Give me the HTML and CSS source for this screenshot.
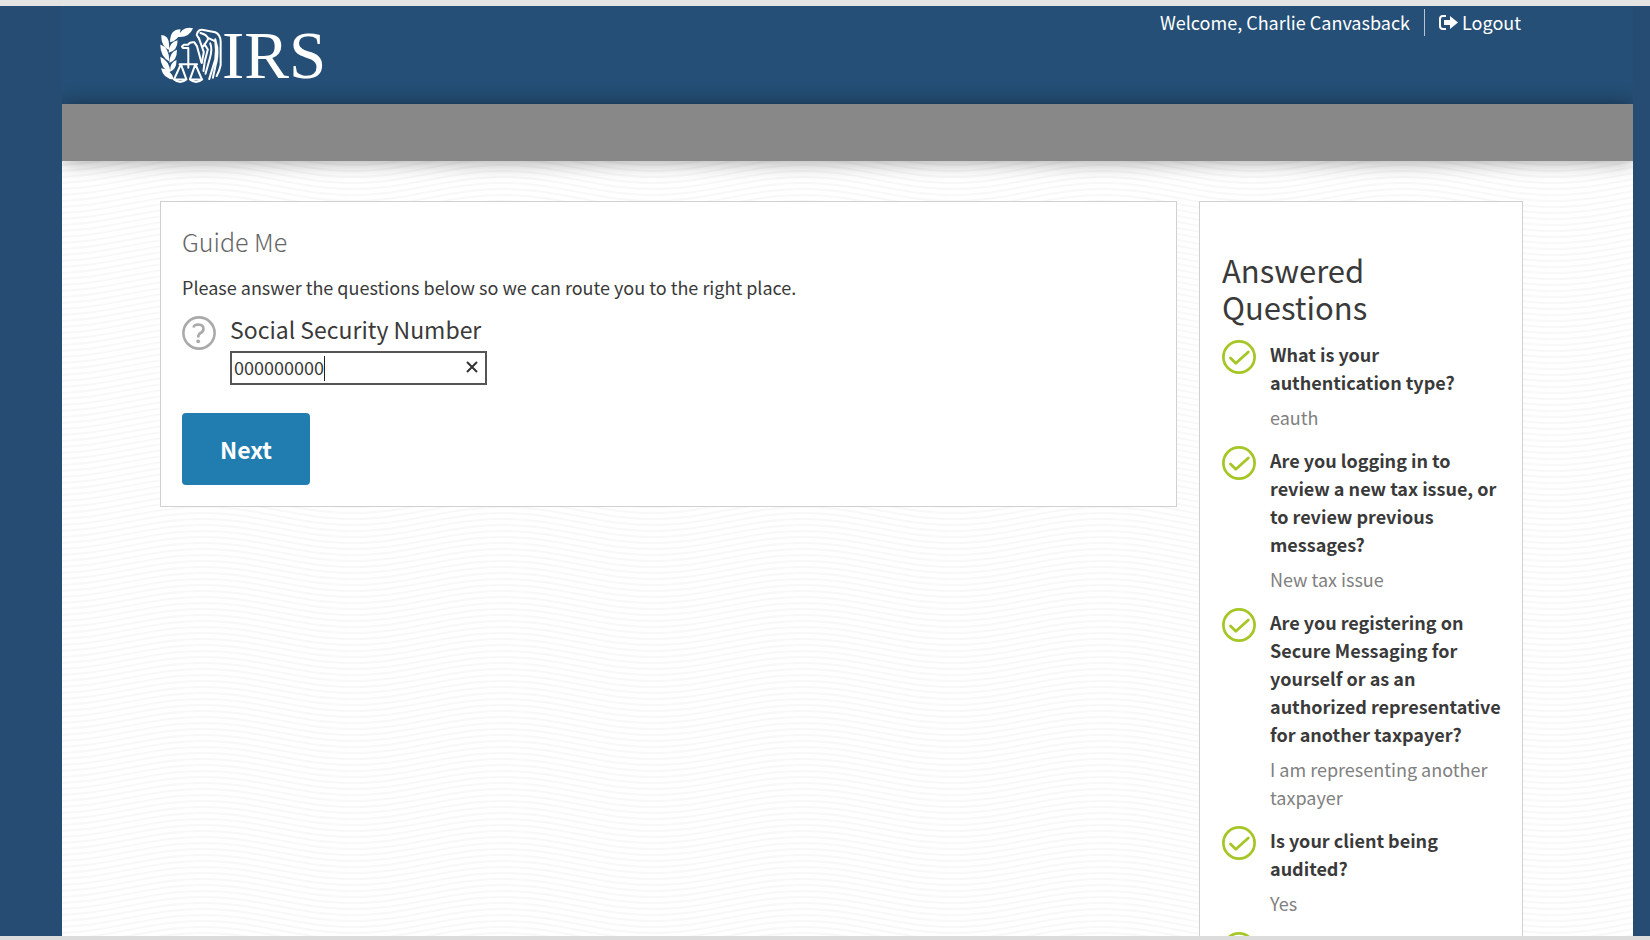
FILE: index.html
```html
<!DOCTYPE html>
<html lang="en">
<head>
  <meta charset="utf-8">
  <title>Guide Me</title>
  <link rel="stylesheet" href="styles.css">
</head>
<body>
  <!-- shared icons -->
  <svg class="sprite" aria-hidden="true">
    <symbol id="check" viewBox="0 0 34 34">
      <circle cx="17" cy="17" r="15.6" fill="none" stroke="#a6c626" stroke-width="2.7"/>
      <path d="M8.5 18l5.3 5.3L26.3 12" fill="none" stroke="#a6c626" stroke-width="2.8" stroke-linecap="round" stroke-linejoin="round"/>
    </symbol>
  </svg>

  <div class="page">
    <header class="header">
      <a class="logo" href="#" aria-label="IRS">
        <svg class="emblem" viewBox="64 84 184 168" fill="#fff">
          <path d="M162 87Q130 80 117 113Q150 116 162 87zM125 90Q93 90 94 129Q123 121 125 90zM68 107Q96 108 90 152Q66 138 68 107zM65 135Q92 144 92 186Q64 170 65 135zM65 172Q92 184 95 218Q66 208 65 172zM67 206Q97 208 105 239Q74 238 67 206zM116 123Q89 130 90 160Q117 153 116 123zM114 151Q92 158 92 190Q116 182 114 151zM113 181Q93 188 94 216Q114 208 113 181z"/>
          <g fill="none" stroke="#fff" stroke-width="6" stroke-linejoin="round" stroke-linecap="round">
            <path d="M148 204V146M148 146H132L129 141L135 136H147Q152 127 166 129L174 141L187 189"/>
            <path d="M122 194H174M126 194L106 238M126 194L142 238M169 194L153 238M169 194L188 238"/>
            <path d="M106 239Q124 254 142 239zM153 239Q171 254 189 239z"/>
            <path d="M180 118L173 107Q176 89 193 92L228 99Q243 106 244 126V196L239 214L232 229"/>
            <path d="M184 101Q204 106 207 119L193 140M180 118L194 158L188 190M205 115L228 126Q232 150 228 180L210 238M228 120L234 144Q236 176 229 197L221 234M196 134L206 150L197 184L193 214M213 132Q220 148 212 176L199 222"/>
          </g>
        </svg>
        <span class="logo-text">IRS</span>
      </a>
      <div class="account">
        <span class="welcome">Welcome, Charlie Canvasback</span>
        <a class="logout" href="#">
          <svg width="19" height="15" viewBox="0 0 19 15">
            <path d="M7 1H4Q1 1 1 4V11Q1 14 4 14H7" fill="none" stroke="#fff" stroke-width="2"/>
            <path d="M5 5H11V1L19 7.5L11 14V10H5z" fill="#fff"/>
          </svg>
          Logout
        </a>
      </div>
    </header>

    <div class="nav-bar"></div>

    <main class="content">
      <form class="card guide">
        <h1>Guide Me</h1>
        <p>Please answer the questions below so we can route you to the right place.</p>
        <div class="question">
          <svg class="icon" viewBox="0 0 34 34" fill="none" stroke="#aaa" stroke-width="2.6">
            <circle cx="17" cy="17" r="15.6"/>
            <path d="M11.5 11.5Q12 8.5 16.5 8.5Q21.5 8.7 21.5 13Q21.5 15.5 18.5 17Q16.2 18.2 16.2 21.5"/>
            <circle cx="16.2" cy="25.3" r="1.9" fill="#aaa" stroke="none"/>
          </svg>
          <div class="field">
            <label for="ssn">Social Security Number</label>
            <div class="input-wrap">
              <input type="text" id="ssn" value="000000000">
              <span class="caret"></span>
              <button type="button" class="clear" aria-label="Clear">
                <svg width="12" height="12" viewBox="0 0 12 12" stroke="#333" stroke-width="2"><path d="M1 1l10 10M11 1L1 11"/></svg>
              </button>
            </div>
          </div>
        </div>
        <button type="button" class="next">Next</button>
      </form>

      <aside class="card answered">
        <h2>Answered Questions</h2>
        <ul>
          <li>
            <svg class="icon"><use href="#check"/></svg>
            <div><strong>What is your authentication type?</strong><span>eauth</span></div>
          </li>
          <li>
            <svg class="icon"><use href="#check"/></svg>
            <div><strong>Are you logging in to review a new tax issue, or to review previous messages?</strong><span>New tax issue</span></div>
          </li>
          <li>
            <svg class="icon"><use href="#check"/></svg>
            <div><strong>Are you registering on Secure Messaging for yourself or as an authorized representative for another taxpayer?</strong><span>I am representing another taxpayer</span></div>
          </li>
          <li>
            <svg class="icon"><use href="#check"/></svg>
            <div><strong>Is your client being audited?</strong><span>Yes</span></div>
          </li>
          <li>
            <svg class="icon"><use href="#check"/></svg>
          </li>
        </ul>
      </aside>
    </main>
  </div>
</body>
</html>
```
FILE: styles.css
```css
* {
  box-sizing: border-box;
}

body {
  margin: 0;
  height: 100vh;
  padding: 0 17px 0 62px;
  border-top: 6px solid #e4e4e4;
  border-bottom: 4px solid #dcdcdc;
  background-color: #264c74;
  color: #3a3a3a;
  font-family: "Noto Sans CJK SC", "Noto Sans", sans-serif;
  font-size: 18px;
  line-height: 28px;
  overflow: hidden;
}

.sprite {
  display: none;
}

.page {
  height: 100%;
  overflow: hidden;
  background-color: #fff;
  background-image: url("data:image/svg+xml,%3Csvg xmlns='http://www.w3.org/2000/svg' width='300' height='6'%3E%3Cg fill='none' stroke='%23f8f8f8' stroke-width='2'%3E%3Cpath d='M0 -15C55 -15 95 3 150 3S245 -15 300 -15M0 -9C55 -9 95 9 150 9S245 -9 300 -9M0 -3C55 -3 95 15 150 15S245 -3 300 -3M0 3C55 3 95 21 150 21S245 3 300 3M0 -21C55 -21 95 -3 150 -3S245 -21 300 -21'/%3E%3C/g%3E%3C/svg%3E");
  background-position: 141px 0;
}

.header {
  display: flex;
  justify-content: space-between;
  align-items: flex-start;
  height: 98px;
  padding: 0 110px 0 98px;
  background-color: #254f76;
  color: #fff;
}

.header a {
  color: #fff;
  text-decoration: none;
}

.logo {
  display: flex;
  padding-top: 21px;
}

.emblem {
  width: 62px;
  height: 57px;
}

.logo-text {
  font-family: "Liberation Serif", serif;
  font-size: 67px;
  line-height: 57px;
}

.account {
  display: flex;
  padding: 3px 2px 0 0;
  line-height: 27px;
}

.welcome {
  padding-right: 14px;
  border-right: 1px solid #b8c4d0;
}

.logout {
  padding-left: 14px;
}

.nav-bar {
  height: 57px;
  background-color: #888;
  box-shadow: 0 0 20px rgba(0, 0, 0, 0.4);
}

.content {
  display: grid;
  grid-template-columns: 1fr 324px;
  gap: 22px;
  align-items: start;
  padding: 40px 110px 0 98px;
}

.card {
  padding: 21px;
  border: 1px solid #d0d0d0;
  background-color: #fff;
}

.guide h1 {
  margin: 0 0 14px;
  color: #666;
  font-size: 25px;
  line-height: 36px;
  font-weight: 300;
}

.guide p {
  margin: 0 0 10px;
}

.question {
  display: flex;
  gap: 14px;
  margin-bottom: 28px;
}

.icon {
  flex: none;
  width: 34px;
  height: 34px;
}

.question .icon {
  margin-top: 5px;
}

.field label {
  display: block;
  margin-bottom: 4px;
  font-size: 23px;
  line-height: 36px;
}

.input-wrap {
  position: relative;
  width: 257px;
}

.input-wrap input {
  display: block;
  width: 100%;
  height: 34px;
  padding: 0 30px 2px 2px;
  border: 2px solid #555;
  background-color: #fff;
  color: #3a3a3a;
  font-family: inherit;
  font-size: 18px;
  outline: none;
}

/* text cursor and clear button sit over the input */
.caret {
  position: absolute;
  top: 5px;
  left: 94px;
  width: 1px;
  height: 25px;
  background-color: #222;
}

.clear {
  position: absolute;
  top: 10px;
  right: 9px;
  padding: 0;
  border: none;
  background: none;
  line-height: 0;
  cursor: pointer;
}

.next {
  display: block;
  width: 128px;
  height: 72px;
  border: none;
  border-radius: 4px;
  background-color: #217db0;
  color: #fff;
  font-family: inherit;
  font-size: 23px;
  font-weight: bold;
  cursor: pointer;
}

.answered {
  padding: 49px 16px 21px 22px;
}

.answered h2 {
  margin: 0 0 15px;
  font-size: 31px;
  line-height: 37px;
  font-weight: normal;
}

.answered ul {
  margin: 0;
  padding: 0;
  list-style: none;
}

.answered li {
  display: flex;
  gap: 14px;
  margin-bottom: 15px;
}

.answered strong,
.answered span {
  display: block;
}

.answered span {
  margin-top: 7px;
  color: #808080;
}
```
